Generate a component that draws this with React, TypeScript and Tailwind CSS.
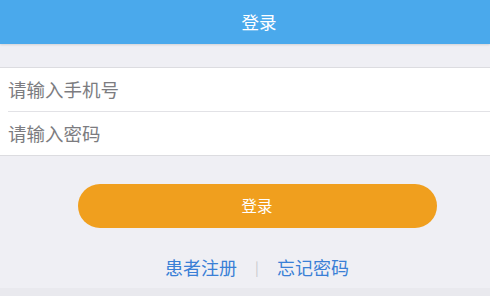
export default function App() {
  return (
    <div
      className="flex h-[296px] w-[490px] flex-col bg-[#efeff4]"
      style={{ fontFamily: '"Noto Sans CJK SC", "Noto Sans", sans-serif' }}
    >
      <header className="flex h-[44px] shrink-0 items-center justify-center bg-[#4aa9ec] pl-[28px] shadow-[0_1px_2px_rgba(0,0,0,0.12)]">
        <h1 className="text-[17.5px] text-white">登录</h1>
      </header>

      <div className="mt-[23px] border-y border-[#dcdce0] bg-white">
        <div className="flex h-[43px] items-center pl-2">
          <span className="text-[18.5px] text-[#7c7c80]">请输入手机号</span>
        </div>
        <div className="ml-2 border-t border-[#e2e2e6]" />
        <div className="flex h-[43px] items-center pl-2">
          <span className="text-[18.5px] text-[#7c7c80]">请输入密码</span>
        </div>
      </div>

      <div className="mt-[28px] flex justify-center pl-[24px]">
        <button className="flex h-[44px] w-[359px] items-center justify-center rounded-full bg-[#f09f1e] text-[15.5px] text-white">
          登录
        </button>
      </div>

      <div className="mt-[26px] flex items-center justify-center gap-[18px] pl-[24px] text-[18px] text-[#3a7fd6]">
        <span>患者注册</span>
        <span className="text-[14px] text-[#c8c8cc]">|</span>
        <span>忘记密码</span>
      </div>

      <div className="mt-auto h-[8px] bg-[#e9e9ee]" />
    </div>
  );
}
